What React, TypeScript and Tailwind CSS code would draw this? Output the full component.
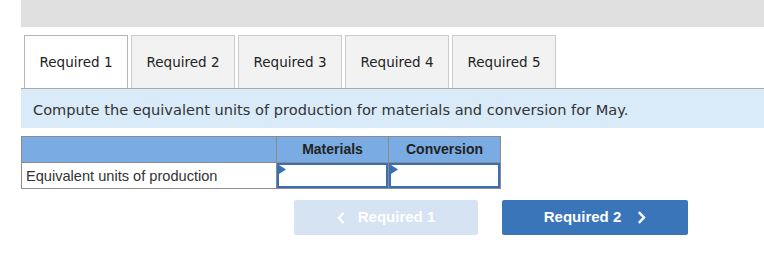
import React from 'react';

const tabs = ['Required 1', 'Required 2', 'Required 3', 'Required 4', 'Required 5'];

const CellInput = () => (
  <div className="relative h-full w-full border-2 border-[#3b6fb3] bg-white">
    <svg className="absolute left-0 top-0" width="7" height="9" viewBox="0 0 7 9">
      <path d="M0 0 L7 4.5 L0 9 Z" fill="#3b6fb3" />
    </svg>
  </div>
);

export default function App() {
  return (
    <div className="h-[266px] w-[764px] bg-white pl-[21px]">
      <div className="h-[27px] bg-[#e0e0e0]" />

      <div className="mt-[8px] flex gap-[3px] border-b border-[#a8a8a8] pl-[3px]">
        {tabs.map((t, i) => (
          <div
            key={t}
            className={
              'flex h-[53px] w-[104px] items-center justify-center border border-b-0 text-[13.5px] text-[#222] ' +
              (i === 0 ? 'border-[#b5b5b5] bg-white' : 'border-[#cccccc] bg-[#f2f2f2]')
            }
            style={{ fontFamily: '"DejaVu Sans", sans-serif' }}
          >
            {t}
          </div>
        ))}
      </div>

      <div
        className="flex h-[39px] items-center bg-[#d9eaf8] pl-[12px] pt-[2px] text-[14.6px] text-[#333]"
        style={{ fontFamily: '"DejaVu Sans", sans-serif' }}
      >
        Compute the equivalent units of production for materials and conversion for May.
      </div>

      <div
        className="mt-[8px] w-[480px] border border-[#8c8c8c] text-[14px]"
        style={{ fontFamily: '"Liberation Sans", Arial, sans-serif' }}
      >
        <div className="grid h-[25px] grid-cols-[254px_112px_112px] bg-[#7aace3] font-bold text-[#222]">
          <div />
          <div className="flex items-center justify-center border-l border-[#8c8c8c]">Materials</div>
          <div className="flex items-center justify-center border-l border-[#8c8c8c]">Conversion</div>
        </div>
        <div className="grid h-[26px] grid-cols-[254px_112px_112px] border-t border-[#8c8c8c] text-[#333]">
          <div className="flex items-center pl-[4px] pt-[2px] text-[14.6px]">Equivalent units of production</div>
          <div className="border-l border-[#8c8c8c]">
            <CellInput />
          </div>
          <div className="border-l border-[#8c8c8c]">
            <CellInput />
          </div>
        </div>
      </div>

      <div
        className="ml-[273px] mt-[11px] flex gap-[24px] text-[15px] font-bold text-white"
        style={{ fontFamily: '"Liberation Sans", Arial, sans-serif' }}
      >
        <button className="flex h-[35px] w-[184px] items-center justify-center gap-[13px] rounded-[2px] bg-[#d6e3f2]">
          <svg width="8" height="12" viewBox="0 0 8 12">
            <path d="M6.5 1 L1.8 6 L6.5 11" stroke="white" strokeWidth="2.2" fill="none" />
          </svg>
          <span>Required 1</span>
        </button>
        <button className="flex h-[35px] w-[186px] items-center justify-center gap-[16px] rounded-[2px] bg-[#3a75ba]">
          <span>Required 2</span>
          <svg width="9" height="13" viewBox="0 0 9 13">
            <path d="M1.8 1.2 L7 6.5 L1.8 11.8" stroke="white" strokeWidth="2.4" fill="none" />
          </svg>
        </button>
      </div>
    </div>
  );
}
